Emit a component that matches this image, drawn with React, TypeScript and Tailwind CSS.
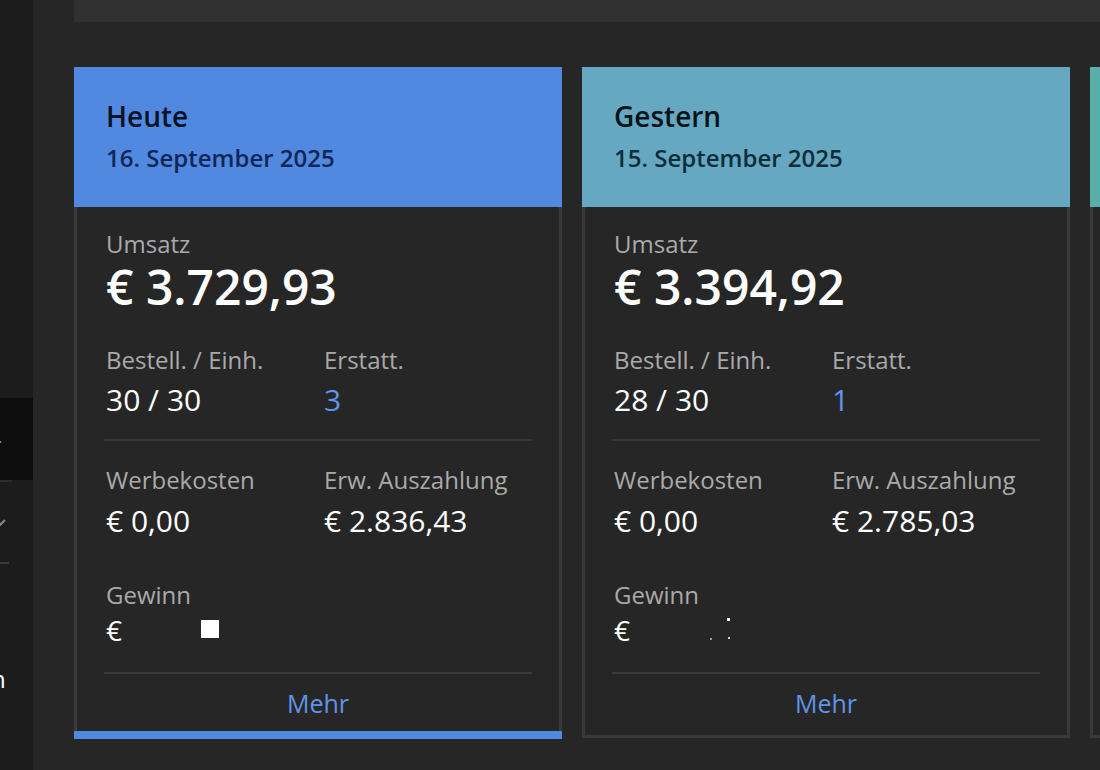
import React from "react";

type CardProps = {
  title: string;
  date: string;
  headerClass: string;
  titleClass: string;
  dateClass: string;
  umsatz: string;
  bestell: string;
  erstatt: string;
  werbe: string;
  auszahlung: string;
  active?: boolean;
  redact: "square" | "dots";
};

function Card(p: CardProps) {
  return (
    <div className="w-[488px] shrink-0 flex flex-col">
      <div className={`h-[140px] px-[32px] pt-[31px] ${p.headerClass}`}>
        <div className={`text-[28px] leading-[36px] font-semibold ${p.titleClass}`}>{p.title}</div>
        <div className={`mt-[9px] text-[24px] leading-[30px] font-semibold ${p.dateClass}`}>{p.date}</div>
      </div>
      <div
        className={`flex flex-col px-[29px] pt-[22px] border-x-[3px] border-[#3a3a3a] ${
          p.active ? "pb-[13px]" : "border-b-[3px] pb-[17px]"
        }`}
      >
        <div className="text-[24px] leading-[30px] text-[#aaaaaa]">Umsatz</div>
        <div className="text-[48px] leading-[56px] font-semibold text-white">{p.umsatz}</div>

        <div className="grid grid-cols-[218px_1fr] mt-[30px]">
          <div>
            <div className="text-[24px] leading-[30px] text-[#aaaaaa]">Bestell. / Einh.</div>
            <div className="mt-[5px] text-[30px] leading-[40px] text-white">{p.bestell}</div>
          </div>
          <div>
            <div className="text-[24px] leading-[30px] text-[#aaaaaa]">Erstatt.</div>
            <div className="mt-[5px] text-[30px] leading-[40px] text-[#5e96e8]">{p.erstatt}</div>
          </div>
        </div>

        <div className="-mx-[2px] mt-[19px] h-[2px] bg-[#3a3a3a]" />

        <div className="grid grid-cols-[218px_1fr] mt-[24px]">
          <div>
            <div className="text-[24px] leading-[30px] text-[#aaaaaa]">Werbekosten</div>
            <div className="mt-[6px] text-[30px] leading-[40px] text-white">{p.werbe}</div>
          </div>
          <div>
            <div className="text-[24px] leading-[30px] text-[#aaaaaa]">Erw. Auszahlung</div>
            <div className="mt-[6px] text-[30px] leading-[40px] text-white">{p.auszahlung}</div>
          </div>
        </div>

        <div className="mt-[39px] text-[24px] leading-[30px] text-[#aaaaaa]">Gewinn</div>
        <div className="relative h-[40px] text-[28px] leading-[40px] text-white">
          €
          {p.redact === "square" ? (
            <span className="absolute left-[95px] top-[10px] w-[18px] h-[18px] bg-white" />
          ) : (
            <>
              <span className="absolute left-[113px] top-[8px] w-[3px] h-[3px] bg-white" />
              <span className="absolute left-[114px] top-[27px] w-[2px] h-[2px] bg-[#cfcfcf]" />
              <span className="absolute left-[96px] top-[28px] w-[2px] h-[2px] bg-[#9a9a9a]" />
            </>
          )}
        </div>

        <div className="-mx-[2px] mt-[22px] h-[2px] bg-[#3a3a3a]" />
        <div className="mt-[14px] text-center text-[25px] leading-[30px] text-[#5e96e8]">Mehr</div>
      </div>
      {p.active && <div className="h-[8px] bg-[#5289e0]" />}
    </div>
  );
}

export default function App() {
  return (
    <div className="w-[1100px] h-[770px] bg-[#262626] flex overflow-hidden font-['Open_Sans',sans-serif]">
      <aside className="w-[33px] shrink-0 bg-[#1c1c1c] flex flex-col overflow-hidden">
        <div className="h-[398px]" />
        <div className="h-[82px] bg-[#0e0e0e] flex items-center relative">
          <svg width="14" height="14" viewBox="0 0 14 14" className="-ml-[9px] mt-[6px]">
            <path d="M4 3 L9 7 L4 11" fill="none" stroke="#9a9a9a" strokeWidth="2" />
          </svg>
        </div>
        <div className="h-[2px] w-[12px] bg-[#2c2c2c]" />
        <div className="h-[80px] flex items-center">
          <svg width="16" height="12" viewBox="0 0 16 12" className="-ml-[10px] mt-[4px]">
            <path d="M2 3 L8 9 L15 2" fill="none" stroke="#8a8a8a" strokeWidth="2" />
          </svg>
        </div>
        <div className="h-[2px] w-[9px] bg-[#3a3a3a]" />
        <div className="h-[100px]" />
        <div className="text-[24px] leading-[30px] text-white -ml-[9px]">n</div>
      </aside>
      <main className="flex-1 pl-[41px] flex flex-col">
        <div className="h-[22px] bg-[#303030] shrink-0" />
        <div className="mt-[45px] flex gap-[20px]">
          <Card
            title="Heute"
            date="16. September 2025"
            headerClass="bg-[#5289e0]"
            titleClass="text-[#081226]"
            dateClass="text-[#0f2757]"
            umsatz="€ 3.729,93"
            bestell="30 / 30"
            erstatt="3"
            werbe="€ 0,00"
            auszahlung="€ 2.836,43"
            active
            redact="square"
          />
          <Card
            title="Gestern"
            date="15. September 2025"
            headerClass="bg-[#66a8c1]"
            titleClass="text-[#051318]"
            dateClass="text-[#0c2d3a]"
            umsatz="€ 3.394,92"
            bestell="28 / 30"
            erstatt="1"
            werbe="€ 0,00"
            auszahlung="€ 2.785,03"
            redact="dots"
          />
          <Card
            title="Diese Woche"
            date="15. – 21. September"
            headerClass="bg-[#5aaea8]"
            titleClass="text-[#051318]"
            dateClass="text-[#0c2d3a]"
            umsatz="€ 7.124,85"
            bestell="58 / 60"
            erstatt="4"
            werbe="€ 0,00"
            auszahlung="€ 5.621,46"
            redact="dots"
          />
        </div>
      </main>
    </div>
  );
}
